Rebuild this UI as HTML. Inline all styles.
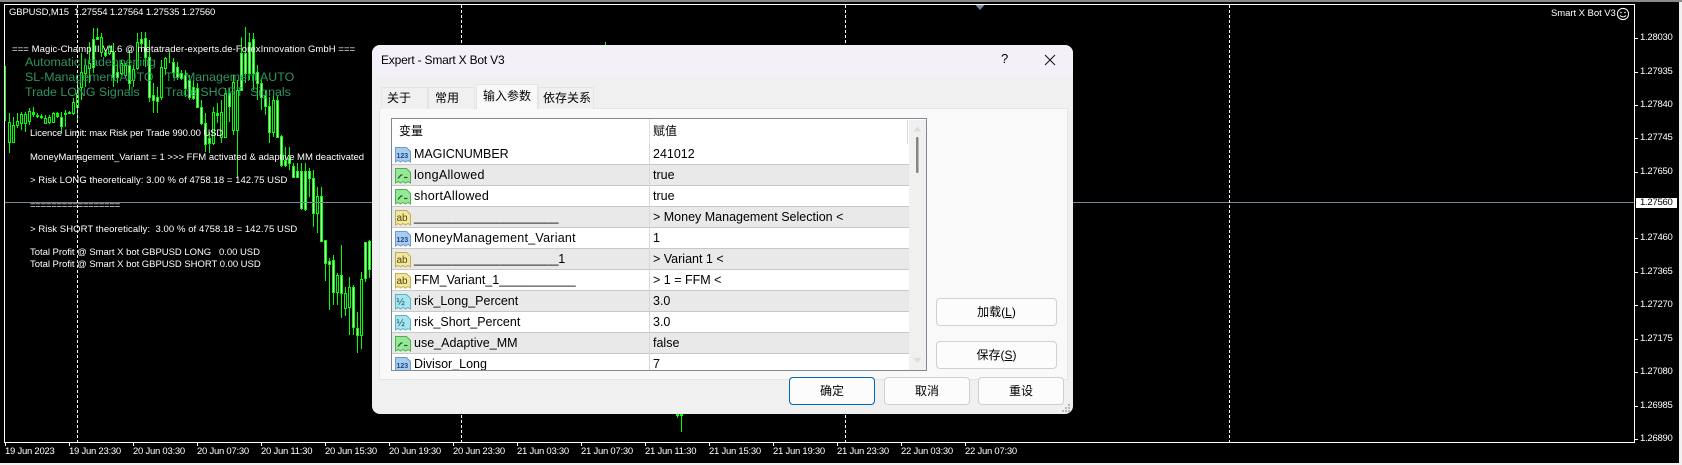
<!DOCTYPE html>
<html><head><meta charset="utf-8"><title>Expert - Smart X Bot V3</title>
<style>
html,body{margin:0;padding:0;background:#f0f0f0;width:1682px;height:465px;overflow:hidden}
#root{position:relative;width:1682px;height:465px;overflow:hidden;font-family:"Liberation Sans","Noto Sans CJK SC",sans-serif}
#bg{position:absolute;left:0;top:2px;width:1679px;height:461px;background:#000}
#top{position:absolute;left:0;top:0;width:1682px;height:2px;background:#8a8a8a}
svg{position:absolute;display:block}
.t{position:absolute;white-space:pre;line-height:12px;font-size:9.5px;letter-spacing:-.25px;color:#fff}
.g{position:absolute;white-space:pre;line-height:15px;font-size:12.4px;color:#2f9460}
#dlg{position:absolute;left:372px;top:45px;width:701px;height:369px;background:#f0f0f0;border-radius:8px;overflow:hidden;color:#000;font-size:12px}
#tb{position:absolute;left:0;top:0;width:701px;height:30px;background:#f3f0f8}
.a{position:absolute;white-space:pre}
.tab{position:absolute;box-sizing:border-box;border:1px solid #e5e5e5;border-bottom:none;background:#f0f0f0;text-align:left;font-size:12px;white-space:nowrap;overflow:hidden}
#panel{position:absolute;left:7px;top:63px;width:689px;height:272px;box-sizing:border-box;background:#f9f9f9;border:1px solid #e5e5e5}
#list{position:absolute;left:19px;top:73px;width:536px;height:253px;box-sizing:border-box;background:#fff;border:1px solid #7f8a94;overflow:hidden}
.row{position:absolute;left:0;width:517px;height:21px;box-sizing:border-box;border-bottom:1px solid #c8c8c8;font-size:12.5px;line-height:20px}
.row.o{background:#e9e9e9}
.row svg{left:3px;top:3px}
.n{position:absolute;left:22px;top:0;white-space:pre}
.v{position:absolute;left:261px;top:0;white-space:pre}
.row::after{content:"";position:absolute;left:257px;top:0;width:1px;height:21px;background:#d8d8d8}
.btn{position:absolute;box-sizing:border-box;border:1px solid #d0d0d0;border-radius:4px;background:#fcfcfc;text-align:center;font-size:12px;line-height:26px}
</style></head><body><div id="root">
<div id="bg"></div><div id="top"></div>
<svg style="left:0;top:0" width="1682" height="465" viewBox="0 0 1682 465" shape-rendering="crispEdges">
<path fill="none" stroke="#0f0" d="M5.5 66V120M9.5 113V153M13.5 117V143M17.5 113V128M21.5 112V130M25.5 112V132M29.5 108V125M33.5 107V117M37.5 113V118M41.5 114V119M45.5 115V124M49.5 115V124M53.5 112V122M57.5 112V118M61.5 112V133M65.5 110V127M69.5 111V114M73.5 98V115M77.5 77V120M81.5 53V100M85.5 60V87M89.5 42V83M93.5 28V73M97.5 28V40M101.5 33V57M105.5 50V57M109.5 45V55M113.5 43V87M117.5 62V83M121.5 60V75M125.5 63V78M129.5 50V90M133.5 65V87M137.5 33V70M141.5 32V52M145.5 32V67M149.5 40V102M153.5 83V113M157.5 87V113M161.5 60V100M165.5 57V75M169.5 52V63M173.5 58V78M177.5 62V80M181.5 70V80M185.5 70V97M189.5 75V100M193.5 80V100M197.5 83V108M201.5 100V125M205.5 113V152M209.5 132V153M213.5 107V145M217.5 103V123M221.5 100V143M225.5 88V138M229.5 88V122M233.5 75V135M237.5 80V178M241.5 37V90M245.5 27V83M249.5 33V80M253.5 33V90M257.5 65V100M261.5 78V110M265.5 90V115M269.5 97V143M273.5 93V137M277.5 95V138M281.5 135V167M285.5 147V167M289.5 147V170M293.5 163V178M297.5 163V178M301.5 163V210M305.5 163V211M309.5 168V197M313.5 170V227M317.5 187V233M321.5 187V242M325.5 240V281M329.5 258V310M333.5 255V305M337.5 273V305M341.5 245V318M345.5 287V316M349.5 277V335M353.5 285V335M357.5 312V353M361.5 272V349M365.5 242V282M369.5 240V278M605.5 42V46M677.5 414V418M681.5 414V432"/>
<path fill="#000" stroke="#0f0" d="M8.5 122.5h2v20h-2zM12.5 125.5h2v17h-2zM16.5 121.5h2v4h-2zM20.5 114.5h2v9h-2zM24.5 114.5h2v9h-2zM28.5 111.5h2v10h-2zM44.5 118.5h2v5h-2zM48.5 117.5h2v5h-2zM52.5 113.5h2v9h-2zM72.5 102.5h2v11h-2zM76.5 93.5h2v14h-2zM80.5 72.5h2v15h-2zM84.5 65.5h2v8h-2zM88.5 63.5h2v5h-2zM100.5 37.5h2v15h-2zM108.5 47.5h2v6h-2zM120.5 63.5h2v10h-2zM124.5 65.5h2v10h-2zM132.5 69.5h2v11h-2zM136.5 42.5h2v26h-2zM160.5 67.5h2v30h-2zM164.5 58.5h2v10h-2zM212.5 112.5h2v31h-2zM220.5 112.5h2v25h-2zM224.5 93.5h2v44h-2zM232.5 82.5h2v48h-2zM236.5 90.5h2v40h-2zM272.5 100.5h2v32h-2zM316.5 196.5h2v17h-2zM336.5 275.5h2v17h-2zM344.5 293.5h2v15h-2zM348.5 287.5h2v20h-2zM360.5 279.5h2v56h-2z"/>
<path fill="#c8ffc8" stroke="#0f0" d="M4.5 66.5h1v54h-1zM60.5 117.5h2v9h-2zM92.5 39.5h2v28h-2zM96.5 37.5h2v2h-2zM104.5 52.5h2v3h-2zM112.5 52.5h2v25h-2zM116.5 72.5h2v5h-2zM128.5 65.5h2v18h-2zM140.5 39.5h2v4h-2zM144.5 38.5h2v19h-2zM148.5 57.5h2v40h-2zM152.5 95.5h2v5h-2zM156.5 97.5h2v4h-2zM172.5 62.5h2v10h-2zM176.5 67.5h2v10h-2zM180.5 73.5h2v5h-2zM184.5 75.5h2v13h-2zM188.5 80.5h2v17h-2zM192.5 87.5h2v11h-2zM196.5 88.5h2v19h-2zM200.5 107.5h2v16h-2zM204.5 123.5h2v21h-2zM208.5 138.5h2v5h-2zM228.5 93.5h2v13h-2zM240.5 53.5h2v37h-2zM244.5 53.5h2v20h-2zM248.5 42.5h2v31h-2zM252.5 39.5h2v34h-2zM256.5 72.5h2v11h-2zM260.5 83.5h2v14h-2zM264.5 95.5h2v11h-2zM268.5 106.5h2v26h-2zM276.5 100.5h2v37h-2zM280.5 136.5h2v29h-2zM284.5 160.5h2v5h-2zM288.5 158.5h2v5h-2zM292.5 166.5h2v11h-2zM296.5 171.5h2v6h-2zM300.5 171.5h2v37h-2zM304.5 171.5h2v38h-2zM308.5 171.5h2v7h-2zM312.5 178.5h2v35h-2zM320.5 196.5h2v45h-2zM324.5 240.5h2v23h-2zM328.5 261.5h2v3h-2zM332.5 260.5h2v32h-2zM340.5 275.5h2v18h-2zM352.5 287.5h2v40h-2zM356.5 328.5h2v7h-2zM364.5 242.5h2v36h-2zM368.5 241.5h2v28h-2z"/>
<path fill="#0f0" d="M32 112h3v3h-3zM36 115h3v2h-3zM40 116h3v2h-3zM56 113h3v4h-3zM64 113h3v2h-3zM68 112h3v2h-3zM216 113h3v3h-3zM676 414h3v2h-3zM680 414h3v2h-3z"/>
<path fill="none" stroke="#789" d="M5 202.5H1634"/>
<path fill="none" stroke="#fff" stroke-dasharray="3 2" d="M77.5 5V442M461.5 5V442M845.5 5V442M1229.5 5V442"/>
<path fill="none" stroke="#fff" d="M4.5 4.5H1634.5V442.5H4.5ZM1635 38.5h3M1635 72.5h3M1635 105.5h3M1635 138.5h3M1635 172.5h3M1635 238.5h3M1635 272.5h3M1635 305.5h3M1635 339.5h3M1635 372.5h3M1635 406.5h3M1635 439.5h3M5.5 443v3M69.5 443v3M133.5 443v3M197.5 443v3M261.5 443v3M325.5 443v3M389.5 443v3M453.5 443v3M517.5 443v3M581.5 443v3M645.5 443v3M709.5 443v3M773.5 443v3M837.5 443v3M901.5 443v3M965.5 443v3"/>
<path fill="#789" shape-rendering="auto" d="M975.5 5h9l-4.5 5z"/>
</svg>

<div class="t" style="left:9px;top:7px;letter-spacing:-.13px">GBPUSD,M15  1.27554 1.27564 1.27535 1.27560</div>
<div class="t" style="left:12px;top:44px;letter-spacing:.08px">=== Magic-Champ II V1.6 @ metatrader-experts.de-ForexInnovation GmbH ===</div>
<div class="g" style="left:25px;top:55px">Automatic tradeopening</div>
<div class="g" style="left:25px;top:70px">SL-Management AUTO</div>
<div class="g" style="left:165px;top:70px">TP-Management AUTO</div>
<div class="g" style="left:25px;top:85px">Trade LONG Signals</div>
<div class="g" style="left:165px;top:85px">Trade SHORT  Signals</div>
<div class="t" style="left:30px;top:128px;letter-spacing:-.1px">Licence Limit: max Risk per Trade 990.00 USD</div>
<div class="t" style="left:30px;top:152px;letter-spacing:0">MoneyManagement_Variant = 1 &gt;&gt;&gt; FFM activated &amp; adaptive MM deactivated</div>
<div class="t" style="left:30px;top:175px;letter-spacing:.05px">&gt; Risk LONG theoretically: 3.00 % of 4758.18 = 142.75 USD</div>
<div class="t" style="left:30px;top:200px">=================</div>
<div class="t" style="left:30px;top:224px;letter-spacing:.07px">&gt; Risk SHORT theoretically:  3.00 % of 4758.18 = 142.75 USD</div>
<div class="t" style="left:30px;top:247px;letter-spacing:-.03px">Total Profit @ Smart X bot GBPUSD LONG   0.00 USD</div>
<div class="t" style="left:30px;top:259px;letter-spacing:-.03px">Total Profit @ Smart X bot GBPUSD SHORT 0.00 USD</div>

<div class="t" style="left:1551px;top:8px;letter-spacing:-.05px">Smart X Bot V3</div>
<svg style="left:1616px;top:7px" width="14" height="14" viewBox="0 0 14 14"><circle cx="7" cy="7" r="5.6" fill="none" stroke="#fff"/><circle cx="5" cy="5.5" r=".8" fill="#fff"/><circle cx="9" cy="5.5" r=".8" fill="#fff"/><path d="M4 8.5q3 3 6 0" fill="none" stroke="#fff"/></svg>

<div class="t" style="left:1640px;top:32px">1.28030</div>
<div class="t" style="left:1640px;top:66px">1.27935</div>
<div class="t" style="left:1640px;top:99px">1.27840</div>
<div class="t" style="left:1640px;top:132px">1.27745</div>
<div class="t" style="left:1640px;top:166px">1.27650</div>
<div style="position:absolute;left:1636px;top:198px;width:41px;height:10px;background:#fff"></div>
<div class="t" style="left:1640px;top:197px;color:#000">1.27560</div>
<div class="t" style="left:1640px;top:232px">1.27460</div>
<div class="t" style="left:1640px;top:266px">1.27365</div>
<div class="t" style="left:1640px;top:299px">1.27270</div>
<div class="t" style="left:1640px;top:333px">1.27175</div>
<div class="t" style="left:1640px;top:366px">1.27080</div>
<div class="t" style="left:1640px;top:400px">1.26985</div>
<div class="t" style="left:1640px;top:433px">1.26890</div>

<div class="t" style="left:5px;top:446px">19 Jun 2023</div>
<div class="t" style="left:69px;top:446px">19 Jun 23:30</div>
<div class="t" style="left:133px;top:446px">20 Jun 03:30</div>
<div class="t" style="left:197px;top:446px">20 Jun 07:30</div>
<div class="t" style="left:261px;top:446px">20 Jun 11:30</div>
<div class="t" style="left:325px;top:446px">20 Jun 15:30</div>
<div class="t" style="left:389px;top:446px">20 Jun 19:30</div>
<div class="t" style="left:453px;top:446px">20 Jun 23:30</div>
<div class="t" style="left:517px;top:446px">21 Jun 03:30</div>
<div class="t" style="left:581px;top:446px">21 Jun 07:30</div>
<div class="t" style="left:645px;top:446px">21 Jun 11:30</div>
<div class="t" style="left:709px;top:446px">21 Jun 15:30</div>
<div class="t" style="left:773px;top:446px">21 Jun 19:30</div>
<div class="t" style="left:837px;top:446px">21 Jun 23:30</div>
<div class="t" style="left:901px;top:446px">22 Jun 03:30</div>
<div class="t" style="left:965px;top:446px">22 Jun 07:30</div>

<div id="dlg">
<div id="tb"></div>
<div class="a" style="left:9px;top:7px;font-size:12px;letter-spacing:-.2px;line-height:16px">Expert - Smart X Bot V3</div>
<div class="a" style="left:629px;top:6px;font-size:13px;line-height:16px">?</div>
<svg style="left:672px;top:9px" width="12" height="12" viewBox="0 0 12 12"><path d="M1 1L11 11M11 1L1 11" stroke="#111" stroke-width="1" fill="none"/></svg>

<div id="panel"></div>
<div class="tab" style="left:9px;top:42px;width:47px;height:22px;line-height:21px;padding-left:5px">关于</div>
<div class="tab" style="left:56px;top:42px;width:47px;height:22px;line-height:21px;padding-left:6px">常用</div>
<div class="tab" style="left:104px;top:39px;width:62px;height:25px;line-height:22px;background:#f9f9f9;padding-left:6px">输入参数</div>
<div class="tab" style="left:166px;top:42px;width:56px;height:22px;line-height:21px;padding-left:4px">依存关系</div>

<div id="list">
<div class="a" style="left:7px;top:3px;font-size:12px;line-height:18px">变量</div>
<div class="a" style="left:257px;top:0;width:1px;height:25px;background:#e2e2e2"></div>
<div class="a" style="left:261px;top:3px;font-size:12px;line-height:18px">赋值</div>
<div class="a" style="left:515px;top:1px;width:1px;height:24px;background:#d8d8d8"></div>

<div class="row" style="top:25px"><svg width="16" height="16" viewBox="0 0 16 16"><path d="M.5.5h11l4 4v10.500l-2.500-1.500-2.500 1.500-2.500-1.500-2.500 1.500-2.500-1.500-2.500 1.500z" fill="#a9cbee" stroke="#6c9ac9"/><text x="1.500" y="11" font-size="7" font-weight="bold" font-family="Liberation Sans" fill="#174a86">123</text></svg><span class="n" style="letter-spacing:-.05px">MAGICNUMBER</span><span class="v">241012</span></div>
<div class="row o" style="top:46px"><svg width="16" height="16" viewBox="0 0 16 16"><path d="M.5.5h11l4 4v10.500l-2.500-1.500-2.500 1.500-2.500-1.500-2.500 1.500-2.500-1.500-2.500 1.500z" fill="#98e698" stroke="#4db04d"/><path d="M3 10.500l3-3.500h1.500M9 9.500h3.500" fill="none" stroke="#17641d" stroke-width="1.300"/></svg><span class="n" style="letter-spacing:.3px">longAllowed</span><span class="v">true</span></div>
<div class="row" style="top:67px"><svg width="16" height="16" viewBox="0 0 16 16"><path d="M.5.5h11l4 4v10.500l-2.500-1.500-2.500 1.500-2.500-1.500-2.500 1.500-2.500-1.500-2.500 1.500z" fill="#98e698" stroke="#4db04d"/><path d="M3 10.500l3-3.500h1.500M9 9.500h3.500" fill="none" stroke="#17641d" stroke-width="1.300"/></svg><span class="n" style="letter-spacing:.3px">shortAllowed</span><span class="v">true</span></div>
<div class="row o" style="top:88px"><svg width="16" height="16" viewBox="0 0 16 16"><path d="M.5.5h11l4 4v10.500l-2.500-1.500-2.500 1.500-2.500-1.500-2.500 1.500-2.500-1.500-2.500 1.500z" fill="#f1e7a2" stroke="#bfae50"/><text x="1.500" y="11" font-size="10" font-family="Liberation Sans" fill="#5a4800">ab</text></svg><span class="n" style="letter-spacing:-.08px">_____________________</span><span class="v">&gt; Money Management Selection &lt;</span></div>
<div class="row" style="top:109px"><svg width="16" height="16" viewBox="0 0 16 16"><path d="M.5.5h11l4 4v10.500l-2.500-1.500-2.500 1.500-2.500-1.500-2.500 1.500-2.500-1.500-2.500 1.500z" fill="#a9cbee" stroke="#6c9ac9"/><text x="1.500" y="11" font-size="7" font-weight="bold" font-family="Liberation Sans" fill="#174a86">123</text></svg><span class="n" style="letter-spacing:.25px">MoneyManagement_Variant</span><span class="v">1</span></div>
<div class="row o" style="top:130px"><svg width="16" height="16" viewBox="0 0 16 16"><path d="M.5.5h11l4 4v10.500l-2.500-1.500-2.500 1.500-2.500-1.500-2.500 1.500-2.500-1.500-2.500 1.500z" fill="#f1e7a2" stroke="#bfae50"/><text x="1.500" y="11" font-size="10" font-family="Liberation Sans" fill="#5a4800">ab</text></svg><span class="n" style="letter-spacing:-.08px">_____________________1</span><span class="v">&gt; Variant 1 &lt;</span></div>
<div class="row" style="top:151px"><svg width="16" height="16" viewBox="0 0 16 16"><path d="M.5.5h11l4 4v10.500l-2.500-1.500-2.500 1.500-2.500-1.500-2.500 1.500-2.500-1.500-2.500 1.500z" fill="#f1e7a2" stroke="#bfae50"/><text x="1.500" y="11" font-size="10" font-family="Liberation Sans" fill="#5a4800">ab</text></svg><span class="n">FFM_Variant_1___________</span><span class="v">&gt; 1 = FFM &lt;</span></div>
<div class="row o" style="top:172px"><svg width="16" height="16" viewBox="0 0 16 16"><path d="M.5.5h11l4 4v10.500l-2.500-1.500-2.500 1.500-2.500-1.500-2.500 1.500-2.500-1.500-2.500 1.500z" fill="#a8e5ef" stroke="#58b4c9"/><text x="1.500" y="11" font-size="10" font-family="Liberation Sans" fill="#14505f">½</text></svg><span class="n">risk_Long_Percent</span><span class="v">3.0</span></div>
<div class="row" style="top:193px"><svg width="16" height="16" viewBox="0 0 16 16"><path d="M.5.5h11l4 4v10.500l-2.500-1.500-2.500 1.500-2.500-1.500-2.500 1.500-2.500-1.500-2.500 1.500z" fill="#a8e5ef" stroke="#58b4c9"/><text x="1.500" y="11" font-size="10" font-family="Liberation Sans" fill="#14505f">½</text></svg><span class="n">risk_Short_Percent</span><span class="v">3.0</span></div>
<div class="row o" style="top:214px"><svg width="16" height="16" viewBox="0 0 16 16"><path d="M.5.5h11l4 4v10.500l-2.500-1.500-2.500 1.500-2.500-1.500-2.500 1.500-2.500-1.500-2.500 1.500z" fill="#98e698" stroke="#4db04d"/><path d="M3 10.500l3-3.500h1.500M9 9.500h3.500" fill="none" stroke="#17641d" stroke-width="1.300"/></svg><span class="n">use_Adaptive_MM</span><span class="v">false</span></div>
<div class="row" style="top:235px;border:none;height:16px;overflow:hidden"><svg width="16" height="16" viewBox="0 0 16 16"><path d="M.5.5h11l4 4v10.500l-2.500-1.500-2.500 1.500-2.500-1.500-2.500 1.500-2.500-1.500-2.500 1.500z" fill="#a9cbee" stroke="#6c9ac9"/><text x="1.500" y="11" font-size="7" font-weight="bold" font-family="Liberation Sans" fill="#174a86">123</text></svg><span class="n">Divisor_Long</span><span class="v">7</span></div>

<div class="a" style="left:517px;top:1px;width:17px;height:250px;background:#f0f0f0"></div>
<svg style="left:517px;top:1px" width="17" height="250" viewBox="0 0 17 250"><path d="M4.500 11.500l4-5 4 5z" fill="#dcdcdc"/><path d="M4.500 238l4 5 4-5z" fill="#dcdcdc"/><rect x="7" y="17" width="2.500" height="36" rx="1" fill="#858585"/></svg>
</div>

<div class="btn" style="left:564px;top:253px;width:121px;height:28px">加载(<u>L</u>)</div>
<div class="btn" style="left:564px;top:296px;width:121px;height:28px">保存(<u>S</u>)</div>
<div class="btn" style="left:417px;top:332px;width:86px;height:28px;border-color:#0067c0">确定</div>
<div class="btn" style="left:512px;top:332px;width:86px;height:28px">取消</div>
<div class="btn" style="left:606px;top:332px;width:86px;height:28px">重设</div>
<svg style="left:690px;top:359px" width="9" height="9" viewBox="0 0 9 9"><path fill="#b5b5b5" d="M6 0h2v2h-2zM3 3h2v2h-2zM6 3h2v2h-2zM0 6h2v2h-2zM3 6h2v2h-2zM6 6h2v2h-2z"/></svg>
</div>
</div></body></html>
